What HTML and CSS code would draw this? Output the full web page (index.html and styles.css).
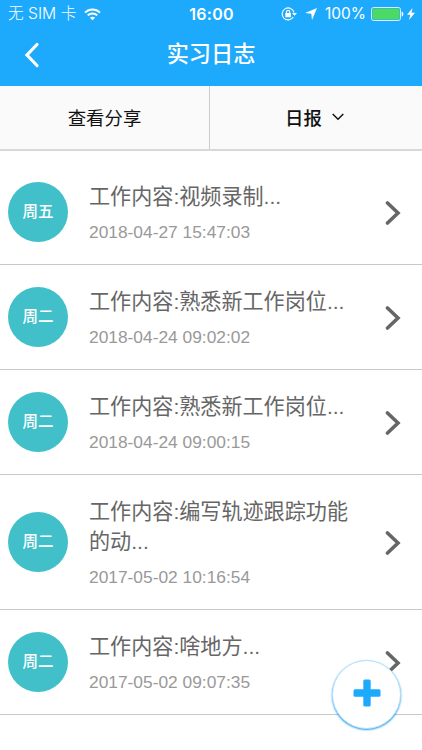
FILE: index.html
```
<!DOCTYPE html>
<html lang="zh-CN">
<head>
    <meta charset="UTF-8">
    <meta name="viewport" content="width=device-width, initial-scale=1.0">
    <title>实习日志</title>
    <link rel="stylesheet" href="styles.css">
</head>
<body>
    <header class="header">
        <!-- Status bar -->
        <div class="status-bar">
            <div class="status-left">
                <span class="carrier">无 SIM 卡</span>
                <svg class="wifi" width="17" height="13" viewBox="0 0 17 13" fill="none" stroke="#fff" stroke-width="1.9">
                    <path d="M1 4.7C5.2.5 11.8.5 16 4.7M3.7 7.4c2.7-2.6 6.900-2.600 9.600 0"/>
                    <path d="M8.500 12.300L5.900 9.700c1.500-1.400 3.700-1.400 5.200 0z" fill="#fff" stroke="none"/>
                </svg>
            </div>
            <span class="time">16:00</span>
            <div class="status-right">
                <svg class="lock" width="16" height="14" viewBox="0 0 16 14" fill="none" stroke="#fff" stroke-width="1.1">
                    <path d="M12.300 10A6 6 0 1 1 13 5.500"/>
                    <path d="M11 5.900h5l-2.500 2.800z" fill="#fff" stroke="none"/>
                    <path d="M5.500 6.500V5a1.600 1.600 0 0 1 3.200 0v1.500"/>
                    <path d="M4.300 6h5.600v4.200H4.300z" fill="#fff" stroke="none"/>
                </svg>
                <svg class="arrow" width="12" height="12" viewBox="0 0 12 12" fill="#fff">
                    <path d="M12 0L7 12 6.300 5.700 0 5z"/>
                </svg>
                <span class="percent">100%</span>
                <svg class="battery" width="33" height="14" viewBox="0 0 33 14">
                    <rect x=".5" y=".5" width="29" height="13" rx="2" fill="none" stroke="#d5efff"/>
                    <rect x="1.500" y="1.500" width="27" height="11" rx="1" fill="#4cd964"/>
                    <path d="M30.700 4.500c2.200.5 2.200 4.500 0 5z" fill="#fff"/>
                </svg>
                <svg class="bolt" width="8" height="12" viewBox="0 0 8 12" fill="#fff">
                    <path d="M5.500 0L0 6.800h3.300L2 12l6-7.200H4.500z"/>
                </svg>
            </div>
        </div>

        <!-- Title bar -->
        <div class="title-bar">
            <svg class="back" width="16" height="26" viewBox="0 0 16 26" fill="none" stroke="#fff" stroke-width="3.200" stroke-linecap="round">
                <path d="M13 2.500L3 13l10 10.500"/>
            </svg>
            <h1>实习日志</h1>
        </div>
    </header>

    <nav class="tabs">
        <div class="tab">查看分享</div>
        <div class="tab active">日报
            <svg width="12" height="8" viewBox="0 0 12 8" fill="none" stroke="#111" stroke-width="1.500">
                <path d="M.7 1L6 6.200 11.300 1"/>
            </svg>
        </div>
    </nav>

    <!-- Log list -->
    <main class="list">
        <div class="item">
            <div class="day">周五</div>
            <div class="info">
                <p class="content">工作内容:视频录制...</p>
                <p class="date">2018-04-27 15:47:03</p>
            </div>
            <svg class="more" width="16" height="26" viewBox="0 0 16 26"><path d="M2.500 3L13 13 2.500 23"/></svg>
        </div>
        <div class="item">
            <div class="day">周二</div>
            <div class="info">
                <p class="content">工作内容:熟悉新工作岗位...</p>
                <p class="date">2018-04-24 09:02:02</p>
            </div>
            <svg class="more" width="16" height="26" viewBox="0 0 16 26"><path d="M2.500 3L13 13 2.500 23"/></svg>
        </div>
        <div class="item">
            <div class="day">周二</div>
            <div class="info">
                <p class="content">工作内容:熟悉新工作岗位...</p>
                <p class="date">2018-04-24 09:00:15</p>
            </div>
            <svg class="more" width="16" height="26" viewBox="0 0 16 26"><path d="M2.500 3L13 13 2.500 23"/></svg>
        </div>
        <div class="item">
            <div class="day">周二</div>
            <div class="info">
                <p class="content">工作内容:编写轨迹跟踪功能的动...</p>
                <p class="date">2017-05-02 10:16:54</p>
            </div>
            <svg class="more" width="16" height="26" viewBox="0 0 16 26"><path d="M2.500 3L13 13 2.500 23"/></svg>
        </div>
        <div class="item">
            <div class="day">周二</div>
            <div class="info">
                <p class="content">工作内容:啥地方...</p>
                <p class="date">2017-05-02 09:07:35</p>
            </div>
            <svg class="more" width="16" height="26" viewBox="0 0 16 26"><path d="M2.500 3L13 13 2.500 23"/></svg>
        </div>
    </main>

    <!-- Add button -->
    <button class="add" aria-label="添加">
        <svg width="28" height="28" viewBox="0 0 28 28" fill="#1eaafa">
            <rect x="10.300" y="0.500" width="7.400" height="27" rx="1.500"/>
            <rect x="0.500" y="10.300" width="27" height="7.400" rx="1.500"/>
        </svg>
    </button>
</body>
</html>
```
FILE: styles.css
```
* {
    box-sizing: border-box;
}

body {
    font-family: "Liberation Sans", "Noto Sans CJK SC", sans-serif;
    background-color: #fff;
    margin: 0;
    height: 750px;
    overflow: hidden;
}

.header {
    height: 86px;
    background-color: #1eaafc;
    color: #fff;
}

.status-bar {
    display: grid;
    grid-template-columns: 1fr auto 1fr;
    align-items: center;
    height: 28px;
    padding: 0 7px 0 8px;
    font-family: Inter, "Noto Sans CJK SC", sans-serif;
    font-size: 16px;
    line-height: 28px;
}

.status-left,
.status-right {
    display: flex;
    align-items: center;
}

.carrier {
    font-size: 15.7px;
    font-weight: 300;
}

.wifi {
    margin-left: 8px;
}

.time {
    font-weight: 600;
    letter-spacing: 0.3px;
}

.status-right {
    justify-content: flex-end;
}

.lock {
    margin-right: 2px;
}

.arrow {
    margin-left: 6px;
}

.percent {
    margin-left: 8px;
    font-size: 15.5px;
}

.battery {
    margin-left: 5px;
}

.bolt {
    margin-left: 3px;
}

.title-bar {
    display: grid;
    grid-template-columns: 48px 1fr 48px;
    align-items: center;
    height: 53px;
}

.back {
    margin-left: 24px;
}

h1 {
    margin: 0;
    padding-top: 1px;
    font-size: 22.2px;
    font-weight: 500;
    line-height: 52px;
    text-align: center;
}

.tabs {
    display: flex;
    height: 65px;
    background-color: #fafafa;
    border-bottom: 2px solid #d8d8d8;
}

.tab {
    flex: 1;
    display: flex;
    align-items: center;
    justify-content: center;
    padding-bottom: 1px;
    font-size: 18.4px;
    color: #111;
}

.tab:first-child {
    flex: 0 0 210px;
    border-right: 1px solid #ccc;
}

.tab.active {
    gap: 10px;
    padding-right: 3px;
    font-weight: 500;
}

.list {
    padding-top: 9px;
}

.item {
    display: flex;
    align-items: center;
    padding: 19px 21px 19px 8px;
    border-bottom: 1px solid #c8c8c8;
}

.day {
    width: 60px;
    height: 60px;
    border-radius: 50%;
    background-color: #41c0ca;
    color: #fff;
    font-size: 15.5px;
    font-weight: 500;
    line-height: 60px;
    text-align: center;
}

.info {
    width: 275px;
    margin-left: 21px;
    padding-top: 3px;
    margin-bottom: -2px;
}

.content {
    margin: 0;
    font-size: 21.1px;
    line-height: 30px;
    color: #666;
}

.date {
    margin: 6px 0 0;
    font-size: 17.35px;
    line-height: 29px;
    color: #999;
}

.more {
    margin-top: 2px;
    margin-left: auto;
    fill: none;
    stroke: #666;
    stroke-width: 3.6;
    stroke-linecap: round;
}

/* Floating over the list */
.add {
    position: fixed;
    right: 21px;
    bottom: 21px;
    display: flex;
    align-items: center;
    justify-content: center;
    width: 69px;
    height: 69px;
    padding: 0 0 4px;
    border: 1px solid #b5dffa;
    border-radius: 50%;
    background-color: #fff;
    box-shadow: 0 1px 2px #1e9ae8;
}
```
